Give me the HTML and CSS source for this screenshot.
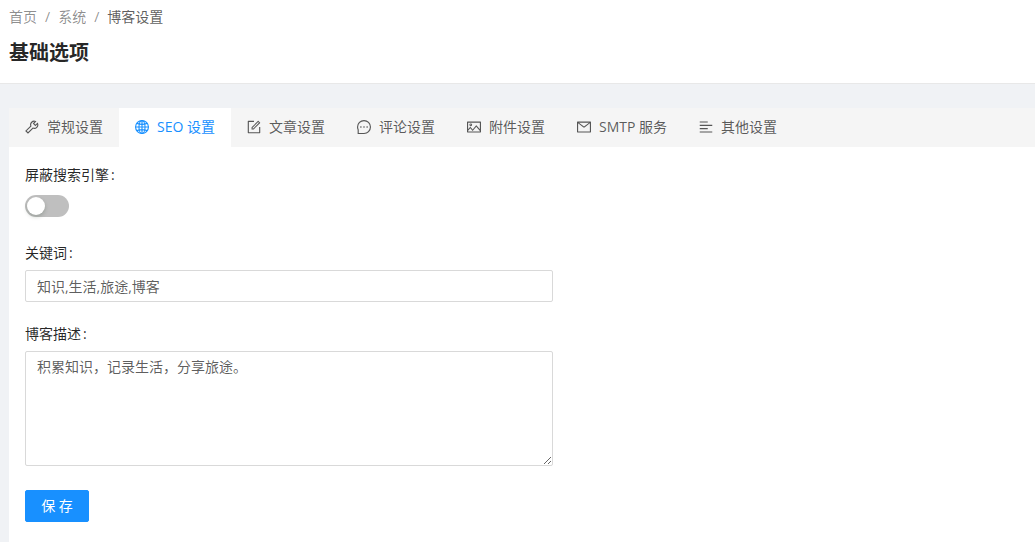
FILE: index.html
```html
<!DOCTYPE html>
<html lang="zh-CN">
<head>
    <meta charset="UTF-8">
    <meta name="viewport" content="width=device-width, initial-scale=1.0">
    <title>博客设置</title>
    <link rel="stylesheet" href="styles.css">
</head>
<body>
    <header class="page-header">
        <nav class="breadcrumb">
            <a href="#">首页</a>
            <span class="separator">/</span>
            <a href="#">系统</a>
            <span class="separator">/</span>
            <span class="current">博客设置</span>
        </nav>
        <h1>基础选项</h1>
    </header>

    <main class="card">
        <div class="tabs" role="tablist">
            <button type="button" class="tab" role="tab">
                <svg class="icon line" viewBox="64 64 896 896"><path d="M865 285L730 410L610 290L735 160A225 225 0 0 0 440 450L125 765L255 895L570 580A225 225 0 0 0 865 285Z"/></svg>
                <span>常规设置</span>
            </button>
            <button type="button" class="tab active" role="tab" aria-selected="true">
                <svg class="icon line" viewBox="64 64 896 896"><circle cx="512" cy="512" r="412"/><ellipse cx="512" cy="512" rx="195" ry="412"/><path d="M512 100V924M100 512H924M190 280Q512 400 834 280M190 744Q512 624 834 744"/></svg>
                <span>SEO 设置</span>
            </button>
            <button type="button" class="tab" role="tab">
                <svg class="icon" viewBox="64 64 896 896"><path d="M904 512h-56c-4.400 0-8 3.600-8 8v320H184V184h320c4.400 0 8-3.600 8-8v-56c0-4.400-3.600-8-8-8H144c-17.700 0-32 14.300-32 32v736c0 17.700 14.300 32 32 32h736c17.700 0 32-14.300 32-32V520c0-4.400-3.600-8-8-8z"/><path d="M355.900 534.900L354 653.800c-.1 8.900 7.100 16.200 16 16.200h.4l118-2.900c2-.1 4-.9 5.400-2.300l415.900-415c3.100-3.100 3.100-8.200 0-11.300L785.400 114.300c-1.600-1.600-3.600-2.300-5.700-2.300s-4.100.8-5.700 2.300l-415.800 415a8.300 8.300 0 0 0-2.300 5.600zm63.500 23.600L779.700 199l45.200 45.100-360.500 359.700-45.700 1.100.7-46.400z"/></svg>
                <span>文章设置</span>
            </button>
            <button type="button" class="tab" role="tab">
                <svg class="icon line" viewBox="64 64 896 896"><path d="M100 512A412 412 0 1 1 512 924H140V690A412 412 0 0 1 100 512Z"/><g class="dots"><circle cx="312" cy="512" r="52"/><circle cx="512" cy="512" r="52"/><circle cx="712" cy="512" r="52"/></g></svg>
                <span>评论设置</span>
            </button>
            <button type="button" class="tab" role="tab">
                <svg class="icon" viewBox="64 64 896 896"><path d="M928 160H96c-17.700 0-32 14.300-32 32v640c0 17.700 14.300 32 32 32h832c17.700 0 32-14.300 32-32V192c0-17.700-14.300-32-32-32zm-40 632H136v-39.900l138.500-164.300 150.100 178L658.100 489 888 761.600V792zm0-129.800L664.200 396.800c-3.200-3.800-9-3.800-12.200 0L424.600 666.400l-144-170.700c-3.200-3.800-9-3.800-12.200 0L136 652.700V232h752v430.200zM304 456a88 88 0 1 0 0-176 88 88 0 0 0 0 176zm0-116c15.500 0 28 12.500 28 28s-12.500 28-28 28-28-12.500-28-28 12.500-28 28-28z"/></svg>
                <span>附件设置</span>
            </button>
            <button type="button" class="tab" role="tab">
                <svg class="icon" viewBox="64 64 896 896"><path d="M928 160H96c-17.700 0-32 14.300-32 32v640c0 17.700 14.300 32 32 32h832c17.700 0 32-14.300 32-32V192c0-17.700-14.300-32-32-32zm-40 110.800V792H136V270.800l-27.600-21.500 39.300-50.500 42.800 33.300h643.100l42.800-33.300 39.300 50.500-27.700 21.500zM833.600 232L512 482 190.400 232l-42.800-33.300-39.300 50.500 27.600 21.500 341.600 265.600a56 56 0 0 0 68.700 0L888 270.800l27.600-21.500-39.300-50.500-42.700 33.200z"/></svg>
                <span>SMTP 服务</span>
            </button>
            <button type="button" class="tab" role="tab">
                <svg class="icon" viewBox="64 64 896 896"><path d="M112 158h512v72H112zM112 370h800v72H112zM112 582h512v72H112zM112 794h800v72H112z"/></svg>
                <span>其他设置</span>
            </button>
        </div>

        <form class="settings-form">
            <div class="form-item">
                <label for="spiderDisabled">屏蔽搜索引擎<span class="colon">:</span></label>
                <input type="checkbox" role="switch" class="switch" id="spiderDisabled">
            </div>
            <div class="form-item">
                <label for="seoKeywords">关键词<span class="colon">:</span></label>
                <input type="text" class="input" id="seoKeywords" value="知识,生活,旅途,博客">
            </div>
            <div class="form-item">
                <label for="seoDescription">博客描述<span class="colon">:</span></label>
                <textarea class="input" id="seoDescription" rows="5">积累知识，记录生活，分享旅途。</textarea>
            </div>
            <button type="button" class="save-button">保 存</button>
        </form>
    </main>
</body>
</html>
```
FILE: styles.css
```css
* {
    box-sizing: border-box;
}

body {
    margin: 0;
    min-height: 100vh;
    display: flex;
    flex-direction: column;
    background-color: #f0f2f5;
    color: rgba(0, 0, 0, 0.85);
    font-family: "Open Sans", "Noto Sans CJK SC", sans-serif;
    font-size: 14px;
    line-height: 22px;
}

button, input, textarea {
    font: inherit;
}

/* Header */
.page-header {
    padding: 6px 9px 14px;
    background-color: #fff;
    border-bottom: 1px solid #e8e8e8;
}

.breadcrumb {
    display: flex;
    gap: 8px;
    color: rgba(0, 0, 0, 0.45);
}

.breadcrumb a {
    color: inherit;
    text-decoration: none;
}

.breadcrumb .current {
    color: rgba(0, 0, 0, 0.65);
}

h1 {
    margin: 9px 0 0;
    font-size: 20px;
    line-height: 32px;
    font-weight: bold;
}

/* Tabs */
.card {
    flex: 1;
    margin: 24px 0 0 9px;
    background-color: #fff;
}

.tabs {
    display: flex;
    background-color: #f5f5f5;
}

.tab {
    display: flex;
    align-items: center;
    gap: 8px;
    height: 39px;
    padding: 0 16px 2px;
    border: none;
    background: none;
    color: rgba(0, 0, 0, 0.65);
    white-space: nowrap;
    cursor: pointer;
}

.tab.active {
    background-color: #fff;
    color: #1890ff;
}

.icon {
    width: 14px;
    height: 14px;
    fill: currentColor;
}

.icon.line {
    fill: none;
    stroke: currentColor;
    stroke-width: 72;
}

.icon .dots {
    fill: currentColor;
    stroke: none;
}

/* Form */
.settings-form {
    padding: 16px;
}

.form-item {
    display: flex;
    flex-direction: column;
    max-width: 528px;
    margin-bottom: 20px;
}

.form-item label {
    margin-bottom: 5px;
    line-height: 24px;
}

.colon {
    margin-left: 2px;
}

.switch {
    appearance: none;
    width: 44px;
    height: 22px;
    margin: 3px 0 4px;
    padding: 2px;
    border-radius: 11px;
    background-color: #bfbfbf;
    cursor: pointer;
}

.switch::before {
    content: "";
    display: block;
    width: 18px;
    height: 18px;
    border-radius: 50%;
    background-color: #fff;
    box-shadow: 0 2px 4px rgba(0, 35, 11, 0.2);
}

.switch:checked {
    background-color: #1890ff;
}

.switch:checked::before {
    margin-left: 22px;
}

.input {
    width: 100%;
    height: 32px;
    padding: 4px 11px;
    border: 1px solid #d9d9d9;
    border-radius: 2px;
    background-color: #fff;
    color: rgba(0, 0, 0, 0.65);
}

textarea.input {
    height: 115px;
    resize: vertical;
}

.save-button {
    display: block;
    height: 32px;
    margin-top: 24px;
    padding: 0 15px;
    min-width: 64px;
    border: 1px solid #1890ff;
    border-radius: 2px;
    background-color: #1890ff;
    color: #fff;
    cursor: pointer;
}
```
